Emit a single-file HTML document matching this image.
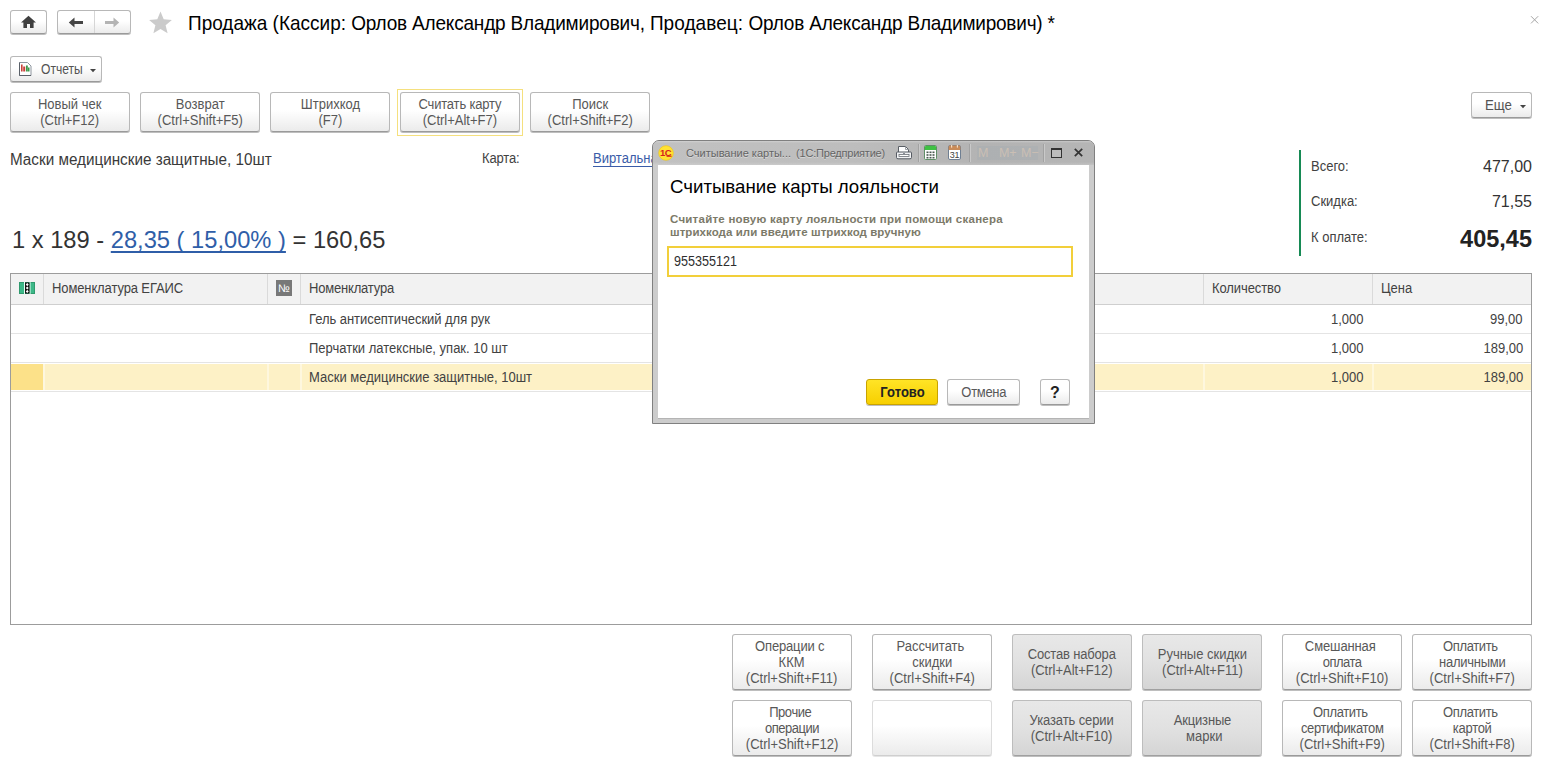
<!DOCTYPE html>
<html lang="ru">
<head>
<meta charset="utf-8">
<title>Продажа</title>
<style>
*{box-sizing:border-box;margin:0;padding:0}
html,body{width:1549px;height:767px;overflow:hidden;background:#fff}
body{position:relative;font-family:"Liberation Sans",sans-serif;font-size:13px;color:#333}
.abs{position:absolute;white-space:nowrap}
.btn{position:absolute;border:1px solid #b8b8b8;border-bottom-color:#9a9a9a;border-radius:3px;
 background:linear-gradient(#ffffff 0%,#ffffff 45%,#ebebeb 100%);box-shadow:0 1px 0 rgba(110,110,110,.45);
 color:#585858;text-align:center;font-size:13px;line-height:16px;display:flex;align-items:center;justify-content:center;white-space:nowrap;padding-top:2px}
.btn.g{background:linear-gradient(#e8e8e8 0%,#e1e1e1 50%,#d5d5d5 100%);border-color:#bdbdbd;border-bottom-color:#a0a0a0}
.btn.dis{border-color:#dcdcdc;border-bottom-color:#cfcfcf;box-shadow:0 1px 0 rgba(190,190,190,.4)}
#title{left:188px;top:12px;font-size:19px;line-height:24px;color:#000;transform:scaleY(1.07);transform-origin:0 18px}
.cell{position:absolute;white-space:nowrap;font-size:13.8px;line-height:16px;color:#424242;transform:scaleX(0.942);transform-origin:0 50%}
.btn i{font-style:normal}
.btn>span{display:inline-block;font-size:13.8px;transform:scaleX(0.942)}
.lbl{position:absolute;white-space:nowrap;font-size:13.8px;line-height:16px;color:#424242;transform:scaleX(0.942);transform-origin:0 50%}
.r{text-align:right}
.cell.r{transform-origin:100% 50%}
.vl{position:absolute;top:274px;width:1px;height:30px;background:#dadada}
.hl{position:absolute;left:11px;width:1520px;height:1px;background:#e4e4e4}
.tsep{position:absolute;top:144px;width:2px;height:18px;background:linear-gradient(90deg,#a2a2a2 50%,#c9c9c9 50%)}
</style>
</head>
<body>
<!-- top bar -->
<div class="btn" style="left:10px;top:10px;width:37px;height:24px"></div>
<svg class="abs" style="left:20px;top:15px" width="17" height="14" viewBox="0 0 17 14"><path d="M8.5 0.8 L16 7.4 H13.6 V13 H10 V9 H7 V13 H3.4 V7.4 H1 Z" fill="#404040"/></svg>
<div class="btn" style="left:57px;top:10px;width:74px;height:24px"></div>
<div class="abs" style="left:94px;top:11px;width:1px;height:22px;background:#d6d6d6"></div>
<svg class="abs" style="left:68px;top:17px" width="16" height="11" viewBox="0 0 16 11"><path d="M0.8 5.5 L6.5 0.6 V4 H15 V7 H6.5 V10.4 Z" fill="#454545"/></svg>
<svg class="abs" style="left:104px;top:17px" width="16" height="11" viewBox="0 0 16 11"><path d="M15.2 5.5 L9.5 0.6 V4 H1 V7 H9.5 V10.4 Z" fill="#b4b4b4"/></svg>
<svg class="abs" style="left:148px;top:11px" width="25" height="24" viewBox="0 0 25 24"><path d="M12.5 0.6 L15.7 8.2 L23.9 8.9 L17.6 14.3 L19.6 22.3 L12.5 18.0 L5.4 22.3 L7.4 14.3 L1.1 8.9 L9.3 8.2 Z" fill="#cbcbcb"/></svg>
<div id="title" class="abs">Продажа (Кассир: <span style="letter-spacing:-0.19px">Орлов Александр Владимирович, </span><span style="letter-spacing:0.07px">Продавец: </span><span style="letter-spacing:-0.21px">Орлов Александр Владимирович) *</span></div>
<svg class="abs" style="left:1529px;top:14px" width="11" height="11" viewBox="0 0 11 11"><path d="M2 2.2 L9.2 9.4 M9.2 2.2 L2 9.4" stroke="#a6a6a6" stroke-width="1" fill="none"/></svg>

<!-- Reports -->
<div class="btn" style="left:10px;top:56px;width:92px;height:26px"></div>
<div class="abs" style="left:40.5px;top:62px;font-size:13.8px;line-height:16px;color:#535353;transform:scaleX(0.875);transform-origin:0 50%">Отчеты</div>
<svg class="abs" style="left:89px;top:68px" width="8" height="5" viewBox="0 0 8 5"><path d="M1 1 H7 L4 4.2 Z" fill="#444"/></svg>
<svg class="abs" style="left:18px;top:62px" width="14" height="14" viewBox="0 0 14 14">
 <path d="M1.5 0.5 H9.5 L13 4 V13.5 H1.5 Z" fill="#fff" stroke="#8d959e" stroke-width="1"/>
 <path d="M1.5 0.5 V13.5 H13" fill="none" stroke="#5a6068" stroke-width="1"/>
 <rect x="3" y="2.5" width="1.6" height="7" fill="#c9423a"/><rect x="5.2" y="4.5" width="2" height="5" fill="#c9423a"/><rect x="8" y="3.5" width="1.8" height="6" fill="#3c9a4a"/><rect x="10" y="5.5" width="1.5" height="4" fill="#3c9a4a"/>
</svg>

<!-- command row -->
<div class="btn" style="left:10px;top:92px;width:120px;height:40px"><span>Новый чек<br>(Ctrl+F12)</span></div>
<div class="btn" style="left:140px;top:92px;width:120px;height:40px"><span>Возврат<br>(Ctrl+Shift+F5)</span></div>
<div class="btn" style="left:270px;top:92px;width:120px;height:40px"><span>Штрихкод<br>(F7)</span></div>
<div class="abs" style="left:397px;top:89px;width:126px;height:47px;border:1px solid #f5e07e"></div>
<div class="btn" style="left:400px;top:92px;width:120px;height:40px"><span><i style="letter-spacing:-0.2px">Считать карту</i><br>(Ctrl+Alt+F7)</span></div>
<div class="btn" style="left:530px;top:92px;width:120px;height:40px"><span>Поиск<br>(Ctrl+Shift+F2)</span></div>
<div class="btn" style="left:1471px;top:92px;width:61px;height:26px"></div>
<div class="abs" style="left:1485px;top:98px;font-size:13.8px;line-height:16px;color:#535353;transform:scaleX(0.96);transform-origin:0 50%">Еще</div>
<svg class="abs" style="left:1519px;top:104px" width="8" height="5" viewBox="0 0 8 5"><path d="M1 1 H7 L4 4.2 Z" fill="#444"/></svg>

<!-- info line -->
<div class="abs" style="left:10px;top:151px;font-size:16px;line-height:18px;color:#3a3a3a;transform:scaleX(0.953);transform-origin:0 0">Маски медицинские защитные, 10шт</div>
<div class="lbl" style="left:482px;top:151px;letter-spacing:-0.15px">Карта:</div>
<div class="lbl" style="left:593px;top:151px;color:#3a5ca8;text-decoration:underline;text-decoration-skip-ink:none;text-underline-offset:3px;text-decoration-thickness:1px">Виртальная карта</div>
<div class="abs" style="left:12px;top:226px;font-size:23.7px;line-height:28px;color:#333">1 x 189 - <span style="color:#2f5ea8;text-decoration:underline;text-decoration-skip-ink:none;text-underline-offset:3px;text-decoration-thickness:1.5px">28,35 ( 15,00% )</span> = 160,65</div>

<!-- totals -->
<div class="abs" style="left:1299px;top:150px;width:2px;height:106px;background:#178a55"></div>
<div class="lbl" style="left:1311px;top:159px">Всего:</div>
<div class="lbl" style="left:1311px;top:194px">Скидка:</div>
<div class="lbl" style="left:1311px;top:230px">К оплате:</div>
<div class="abs r" style="right:17px;top:158px;font-size:16px;line-height:18px;color:#333">477,00</div>
<div class="abs r" style="right:17px;top:193px;font-size:16px;line-height:18px;color:#333">71,55</div>
<div class="abs r" style="right:17px;top:225px;font-size:23.5px;line-height:28px;color:#222;font-weight:bold">405,45</div>

<!-- table -->
<div class="abs" style="left:10px;top:273px;width:1522px;height:352px;border:1px solid #9c9c9c;background:#fff"></div>
<div class="abs" style="left:11px;top:274px;width:1520px;height:31px;background:#f2f2f2;border-bottom:1px solid #cfcfcf"></div>
<div class="vl" style="left:43px"></div>
<div class="vl" style="left:267px"></div>
<div class="vl" style="left:300px"></div>
<div class="vl" style="left:1203px"></div>
<div class="vl" style="left:1372px"></div>
<div class="hl" style="top:333px"></div>
<div class="hl" style="top:362px"></div>
<div class="abs" style="left:11px;top:364px;width:1520px;height:26px;background:#fdf1c6"></div>
<div class="abs" style="left:11px;top:364px;width:32px;height:26px;background:#fce189"></div>
<div class="abs" style="left:43px;top:364px;width:2px;height:26px;background:#fef7de"></div>
<div class="abs" style="left:267px;top:364px;width:2px;height:26px;background:#fef7de"></div>
<div class="abs" style="left:300px;top:364px;width:2px;height:26px;background:#fef7de"></div>
<div class="abs" style="left:1203px;top:364px;width:2px;height:26px;background:#fef7de"></div>
<div class="abs" style="left:1372px;top:364px;width:2px;height:26px;background:#fef7de"></div>
<div class="hl" style="top:391px"></div>
<div class="cell" style="left:52px;top:281px;letter-spacing:-0.12px">Номенклатура ЕГАИС</div>
<div class="cell" style="left:309px;top:281px;letter-spacing:-0.2px">Номенклатура</div>
<div class="cell" style="left:1212px;top:281px;letter-spacing:-0.1px">Количество</div>
<div class="cell" style="left:1381px;top:281px">Цена</div>
<div class="cell" style="left:309px;top:312px;letter-spacing:-0.04px">Гель антисептический для рук</div>
<div class="cell" style="left:309px;top:341px">Перчатки латексные, упак. 10 шт</div>
<div class="cell" style="left:309px;top:370px">Маски медицинские защитные, 10шт</div>
<div class="cell r" style="right:185px;top:312px">1,000</div>
<div class="cell r" style="right:185px;top:341px">1,000</div>
<div class="cell r" style="right:185px;top:370px">1,000</div>
<div class="cell r" style="right:26px;top:312px">99,00</div>
<div class="cell r" style="right:26px;top:341px">189,00</div>
<div class="cell r" style="right:26px;top:370px">189,00</div>
<svg class="abs" style="left:19px;top:282px" width="16" height="12" viewBox="0 0 16 12"><rect x="0" y="0" width="16" height="12" fill="#3db888"/><rect x="0.5" y="0.5" width="15" height="11" fill="none" stroke="#2f9a6e"/><rect x="5" y="0" width="1" height="12" fill="#e9fff5"/><rect x="10.5" y="0" width="1" height="12" fill="#e9fff5"/><rect x="6" y="0.5" width="4.5" height="11" fill="#111"/><path d="M8.25 1 L9.7 2.6 L8.25 4.2 L6.8 2.6 Z M8.25 4.4 L9.7 6 L8.25 7.6 L6.8 6 Z M8.25 7.8 L9.7 9.4 L8.25 11 L6.8 9.4 Z" fill="#fff"/></svg>
<div class="abs" style="left:276px;top:280px;width:16px;height:16px;background:#787878;color:#fff;font-size:11px;line-height:16px;text-align:center">№</div>

<!-- bottom buttons -->
<div class="btn" style="left:732px;top:634px;width:120px;height:56px"><span><i style="letter-spacing:-0.16px">Операции с</i>&nbsp;<br>ККМ<br>(Ctrl+Shift+F11)</span></div>
<div class="btn" style="left:872px;top:634px;width:120px;height:56px"><span>Рассчитать&nbsp;<br>скидки<br>(Ctrl+Shift+F4)</span></div>
<div class="btn g" style="left:1012px;top:634px;width:120px;height:56px"><span><i style="letter-spacing:-0.18px">Состав набора</i><br>(Ctrl+Alt+F12)</span></div>
<div class="btn g" style="left:1142px;top:634px;width:120px;height:56px"><span>Ручные скидки<br>(Ctrl+Alt+F11)</span></div>
<div class="btn" style="left:1282px;top:634px;width:120px;height:56px"><span><i style="letter-spacing:-0.12px">Смешанная</i>&nbsp;<br><i style="letter-spacing:-0.55px">оплата</i><br>(Ctrl+Shift+F10)</span></div>
<div class="btn" style="left:1412px;top:634px;width:120px;height:56px"><span><i style="letter-spacing:-0.39px">Оплатить</i>&nbsp;<br><i style="letter-spacing:-0.29px">наличными</i><br>(Ctrl+Shift+F7)</span></div>
<div class="btn" style="left:732px;top:700px;width:120px;height:56px"><span><i style="letter-spacing:-0.45px">Прочие</i>&nbsp;<br><i style="letter-spacing:-0.52px">операции</i><br>(Ctrl+Shift+F12)</span></div>
<div class="btn dis" style="left:872px;top:700px;width:120px;height:56px"></div>
<div class="btn g" style="left:1012px;top:700px;width:120px;height:56px"><span><i style="letter-spacing:-0.12px">Указать серии</i><br>(Ctrl+Alt+F10)</span></div>
<div class="btn g" style="left:1142px;top:700px;width:120px;height:56px"><span><i style="letter-spacing:-0.19px">Акцизные</i><br>&nbsp;марки</span></div>
<div class="btn" style="left:1282px;top:700px;width:120px;height:56px"><span><i style="letter-spacing:-0.39px">Оплатить</i>&nbsp;<br><i style="letter-spacing:-0.37px">сертификатом</i><br>(Ctrl+Shift+F9)</span></div>
<div class="btn" style="left:1412px;top:700px;width:120px;height:56px"><span><i style="letter-spacing:-0.39px">Оплатить</i>&nbsp;<br><i style="letter-spacing:-0.3px">картой</i><br>(Ctrl+Shift+F8)</span></div>

<!-- dialog -->
<div id="dlg" class="abs" style="left:652px;top:140px;width:443px;height:284px;background:#cccccc;border:1px solid #808080;border-radius:7px 7px 0 0"></div>
<div class="abs" style="left:653px;top:141px;width:441px;height:24px;border-radius:6px 6px 0 0;background:linear-gradient(rgba(255,255,255,.28) 0,rgba(255,255,255,0) 2px,rgba(255,255,255,0) 21px,rgba(255,255,255,.18) 24px),linear-gradient(90deg,#c1c1c1 0%,#bdbdbd 45%,#b3b3b3 75%,#b5b5b5 100%)"></div>
<div class="abs" style="left:658px;top:165px;width:431px;height:253px;background:#fff;box-shadow:0 1px 0 #b4b4b4"></div>
<div class="abs" style="left:686px;top:146px;font-size:11px;line-height:14px;color:#646464;text-shadow:0 1px 0 rgba(255,255,255,.4)">Считывание карты... <span style="letter-spacing:-0.21px;margin-left:2px">(1С:Предприятие)</span></div>
<!-- dialog title icons -->
<svg class="abs" style="left:658px;top:145px" width="16" height="16" viewBox="0 0 16 16"><circle cx="8" cy="8" r="7.3" fill="#ffe234"/><circle cx="8" cy="8" r="7.3" fill="none" stroke="#f5c400" stroke-width="0.6"/><text x="2.1" y="11.3" font-family="Liberation Sans, sans-serif" font-weight="bold" font-size="9.5" fill="#d5241c" letter-spacing="-0.6">1C</text><rect x="8.6" y="10.6" width="5" height="1.2" fill="#d5241c"/></svg>
<svg class="abs" style="left:896px;top:145px" width="16" height="15" viewBox="0 0 16 15"><path d="M2.5 7 V1.5 H9.5 L12.5 4.5 V7" fill="#fff" stroke="#5a5f66" stroke-width="1"/><path d="M9.5 1.5 V4.5 H12.5" fill="none" stroke="#8a8f96" stroke-width="0.8"/><path d="M1.5 7 H14.5 Q15.5 7 15.5 8 V12.5 Q15.5 13.8 14 13.8 H2 Q0.5 13.8 0.5 12.5 V8 Q0.5 7 1.5 7 Z" fill="#f1f2f4" stroke="#555a62" stroke-width="1"/><rect x="3" y="9.5" width="10" height="2" fill="#fff" stroke="#6a6f76" stroke-width="0.8"/><rect x="7" y="8" width="2" height="1" fill="#8a8f96"/></svg>
<div class="tsep" style="left:918px"></div>
<svg class="abs" style="left:924px;top:145px" width="13" height="15" viewBox="0 0 13 15"><rect x="0.5" y="0.5" width="12" height="14" rx="1.2" fill="#fff" stroke="#5f8f66" stroke-width="1"/><path d="M1 1.6 Q1 1 1.6 1 H11.4 Q12 1 12 1.6 V5 H1 Z" fill="#3fc143"/><g fill="#4a5a50"><rect x="2.5" y="6.5" width="2" height="1.6"/><rect x="5.5" y="6.5" width="2" height="1.6"/><rect x="8.5" y="6.5" width="2" height="1.6"/><rect x="2.5" y="9.2" width="2" height="1.6"/><rect x="5.5" y="9.2" width="2" height="1.6"/><rect x="8.5" y="9.2" width="2" height="1.6"/><rect x="2.5" y="11.9" width="2" height="1.6"/><rect x="5.5" y="11.9" width="2" height="1.6"/><rect x="8.5" y="11.9" width="2" height="1.6"/></g></svg>
<svg class="abs" style="left:948px;top:145px" width="13" height="15" viewBox="0 0 13 15"><rect x="0.5" y="0.5" width="12" height="14" rx="1.5" fill="#fff" stroke="#6f7f92" stroke-width="1"/><path d="M0.6 2 Q0.6 0.6 2 0.6 H11 Q12.4 0.6 12.4 2 V5 H0.6 Z" fill="#c98b58"/><rect x="3" y="0" width="1.2" height="2.6" fill="#f3dcc4"/><rect x="8.8" y="0" width="1.2" height="2.6" fill="#f3dcc4"/><text x="6.5" y="13" text-anchor="middle" font-family="Liberation Sans, sans-serif" font-size="9" fill="#444" letter-spacing="-0.3">31</text></svg>
<div class="tsep" style="left:969px"></div>
<div class="abs" style="left:977px;top:146px;width:61px;height:14px;font-size:12.5px;line-height:14px;color:#cbbfb4;letter-spacing:-0.2px;background:rgba(150,165,180,.18)"><span class="abs" style="left:1px">M</span><span class="abs" style="left:22px">M+</span><span class="abs" style="left:44px">M−</span></div>
<div class="tsep" style="left:1043px"></div>
<svg class="abs" style="left:1051px;top:148px" width="11" height="10" viewBox="0 0 11 10"><rect x="0.5" y="1" width="10" height="8.5" fill="#bdbdbd" stroke="#333" stroke-width="1"/><rect x="0" y="0" width="11" height="2" fill="#333"/></svg>
<svg class="abs" style="left:1074px;top:148px" width="9" height="9" viewBox="0 0 9 9"><path d="M0.8 0.8 L8.2 8.2 M8.2 0.8 L0.8 8.2" stroke="#333" stroke-width="1.7" fill="none"/></svg>
<div class="abs" style="left:670px;top:176px;font-size:18.67px;line-height:22px;color:#000">Считывание карты лояльности</div>
<div class="abs" style="left:670px;top:212.5px;font-size:11.5px;line-height:13px;color:#7c7a69;font-weight:bold;letter-spacing:0.24px">Считайте новую карту лояльности при помощи сканера</div>
<div class="abs" style="left:670px;top:225.5px;font-size:11.5px;line-height:13px;color:#7c7a69;font-weight:bold;letter-spacing:0.06px">штрихкода или введите штрихкод вручную</div>
<div class="abs" style="left:667px;top:246px;width:406px;height:31px;border:2px solid #f2cf3a;background:#fff"></div>
<div class="abs" style="left:674px;top:254px;font-size:13.8px;line-height:16px;color:#2e2e2e;transform:scaleX(0.912);transform-origin:0 50%">955355121</div>
<div class="btn" style="left:866px;top:379px;width:72px;height:26px;background:linear-gradient(#ffe426,#f7cf00);border-color:#c9a300;color:#222;font-weight:bold"><span>Готово</span></div>
<div class="btn" style="left:947px;top:379px;width:73px;height:26px;letter-spacing:-0.35px"><span>Отмена</span></div>
<div class="btn" style="left:1040px;top:379px;width:30px;height:26px;color:#222;font-weight:bold"><span style="font-size:16px;transform:none">?</span></div>
</body>
</html>
